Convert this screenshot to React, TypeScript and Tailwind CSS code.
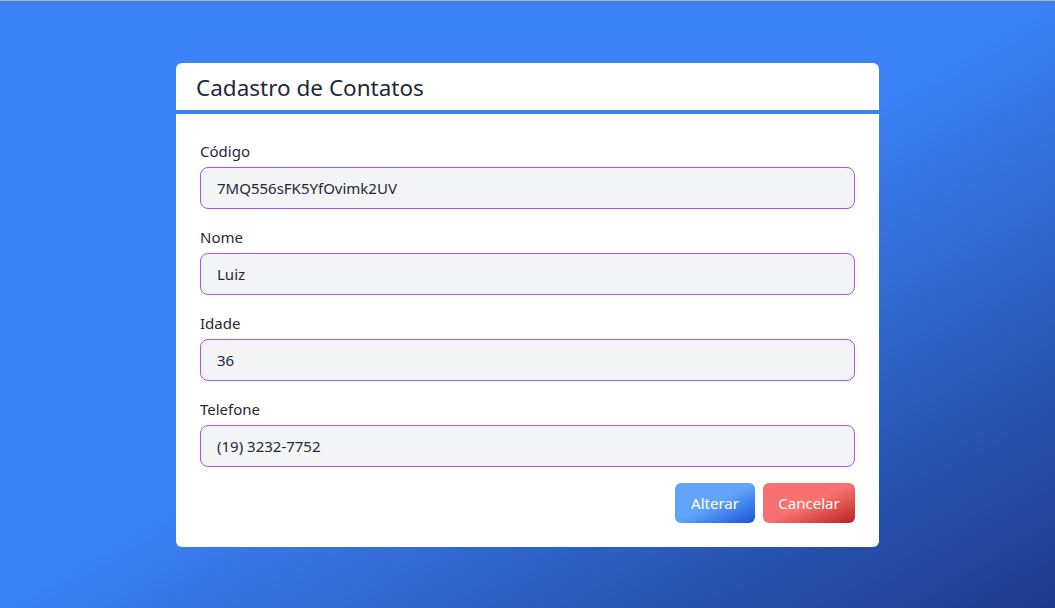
import React, { useState } from "react";

interface Campo {
  id: string;
  label: string;
  value: string;
}

const campos: Campo[] = [
  { id: "codigo", label: "Código", value: "7MQ556sFK5YfOvimk2UV" },
  { id: "nome", label: "Nome", value: "Luiz" },
  { id: "idade", label: "Idade", value: "36" },
  { id: "telefone", label: "Telefone", value: "(19) 3232-7752" },
];

export default function App() {
  const [form, setForm] = useState<Record<string, string>>(
    Object.fromEntries(campos.map((c) => [c.id, c.value]))
  );

  return (
    <div
      className="w-full h-[608px] flex justify-center items-start border-t border-[#b0b4bb] bg-gradient-to-br from-[#3b82f6] via-[#3b82f6] to-[#1e3a8a]"
      style={{ fontFamily: '"Segoe UI", "Noto Sans", "Open Sans", sans-serif' }}
    >
      <div className="mt-[62px] w-[703px] bg-white rounded-md overflow-hidden">
        <div className="h-[47px] px-5 flex items-center border-b-4 border-[#3b82f6] box-content">
          <h1 className="text-[22.5px] text-[#1f2937] leading-none pt-[3px]">
            Cadastro de Contatos
          </h1>
        </div>

        <form className="px-6 pt-[26px] pb-6" onSubmit={(e) => e.preventDefault()}>
          {campos.map((c) => (
            <div key={c.id} className="mb-[17px]">
              <label
                htmlFor={c.id}
                className="block text-[15px] leading-[22px] text-[#1f2937] mb-[5px]"
              >
                {c.label}
              </label>
              <input
                id={c.id}
                value={form[c.id]}
                onChange={(e) => setForm({ ...form, [c.id]: e.target.value })}
                className="w-full h-[42px] px-4 rounded-lg border border-[#a855f7] bg-[#f3f4f6] text-[15px] text-[#1f2937] outline-none"
              />
            </div>
          ))}

          <div className="flex justify-end gap-2 -mt-[1px]">
            <button
              type="submit"
              className="w-20 h-10 rounded-md text-[15px] text-white bg-gradient-to-br from-[#60a5fa] via-[#60a5fa] to-[#1d4ed8]"
            >
              Alterar
            </button>
            <button
              type="button"
              className="w-[92px] h-10 rounded-md text-[15px] text-white bg-gradient-to-br from-[#f87171] via-[#f87171] to-[#b91c1c]"
            >
              Cancelar
            </button>
          </div>
        </form>
      </div>
    </div>
  );
}
